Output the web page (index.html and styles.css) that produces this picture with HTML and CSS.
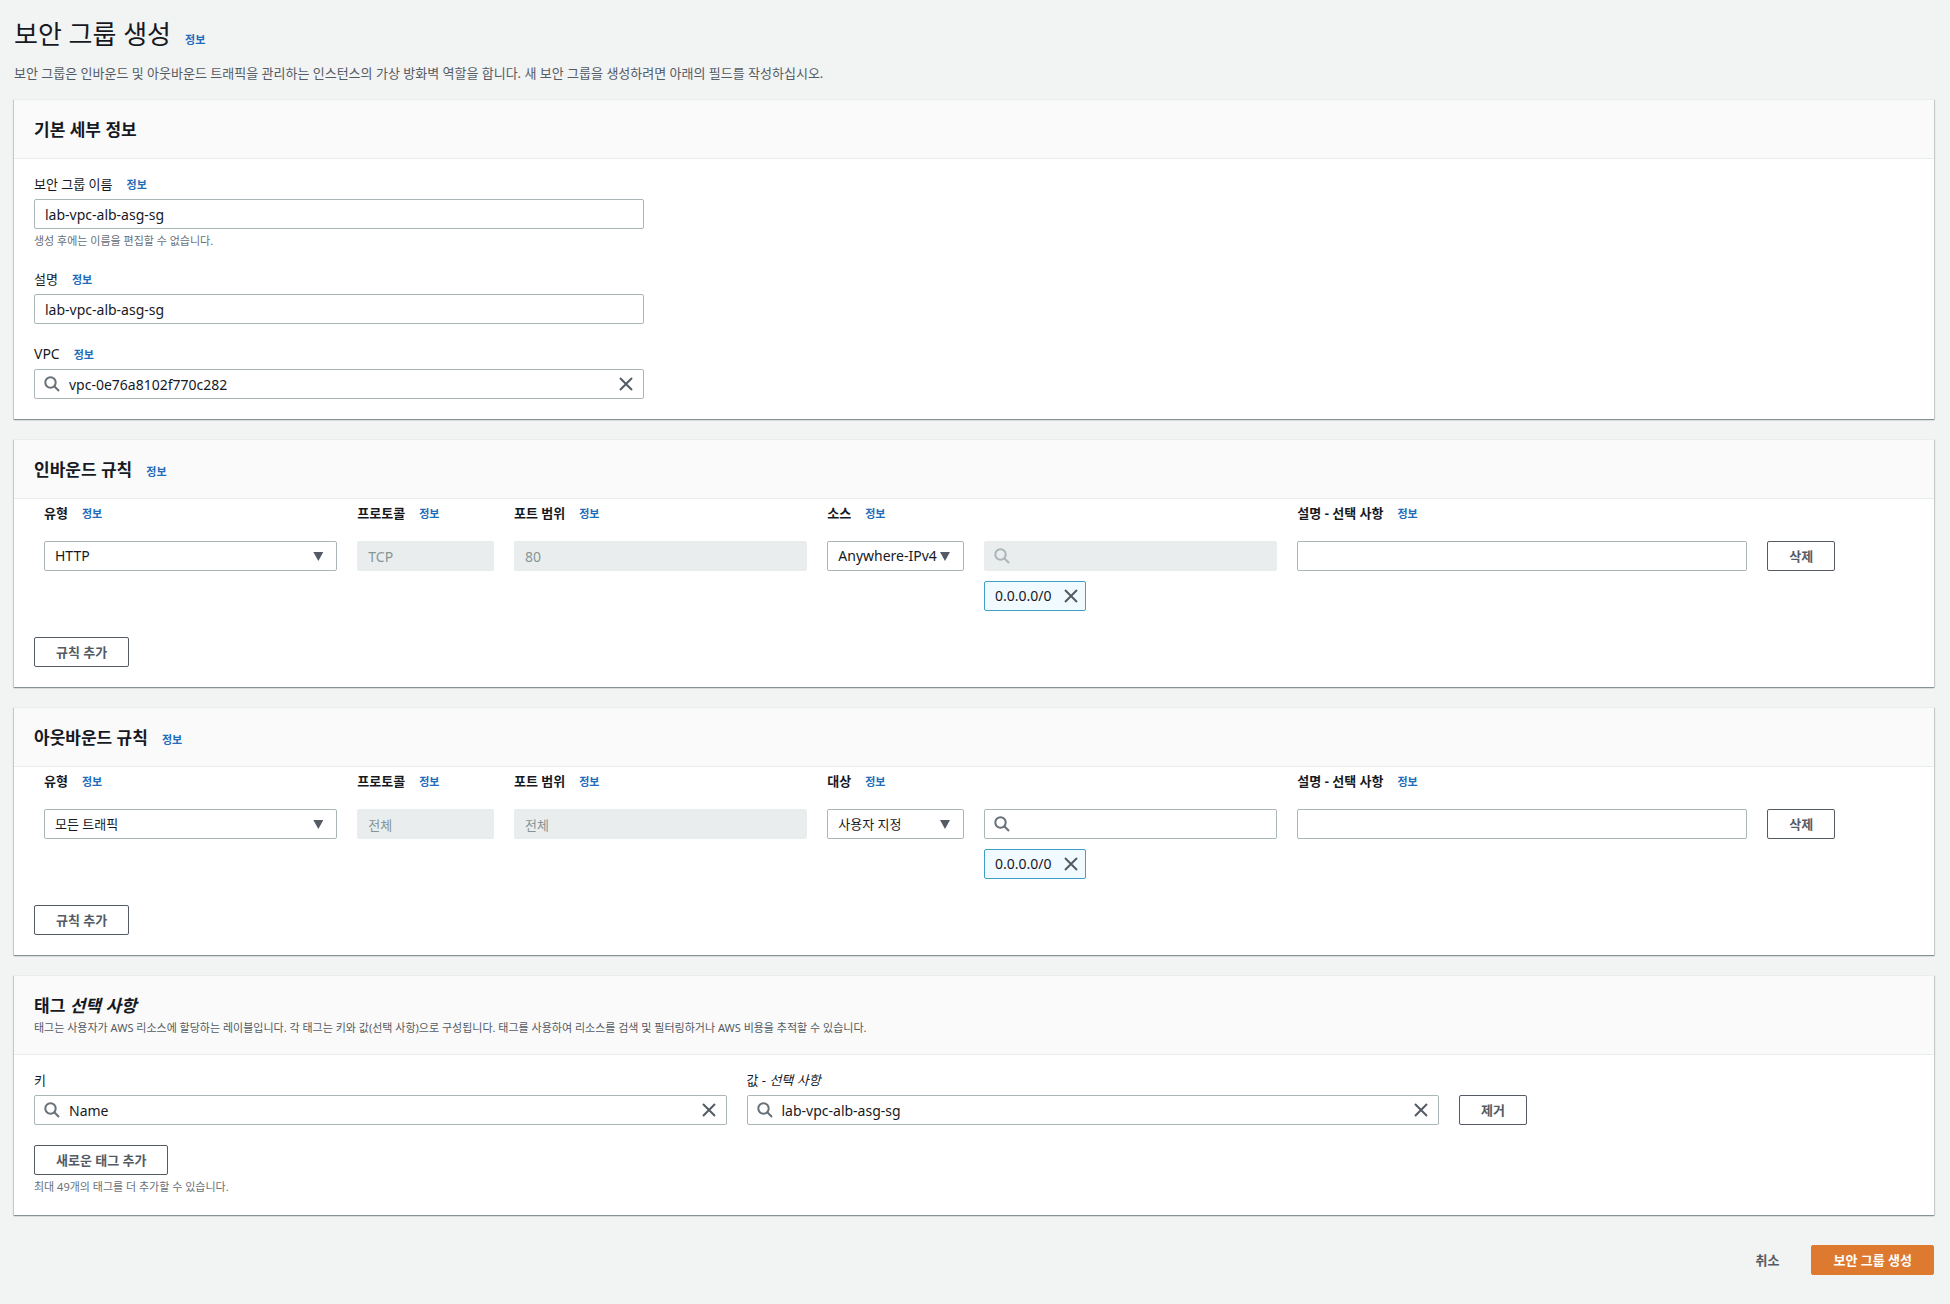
FILE: index.html
```html
<!DOCTYPE html>
<html lang="ko">
<head>
<meta charset="utf-8">
<meta name="viewport" content="width=device-width, initial-scale=1">
<title>보안 그룹 생성</title>
<link rel="stylesheet" href="styles.css">
</head>
<body>
<svg class="sprite" aria-hidden="true">
  <symbol id="icon-search" viewBox="0 0 16 16"><circle cx="6.5" cy="6.5" r="5.2"/><path d="M10.3 10.3 15 15"/></symbol>
  <symbol id="icon-close" viewBox="0 0 16 16"><path d="M2 2l12 12M14 2L2 14"/></symbol>
</svg>
<main class="page">
  <header class="page-header">
    <div class="heading">
      <h1>보안 그룹 생성</h1>
      <a class="info" href="#">정보</a>
    </div>
    <p>보안 그룹은 인바운드 및 아웃바운드 트래픽을 관리하는 인스턴스의 가상 방화벽 역할을 합니다. 새 보안 그룹을 생성하려면 아래의 필드를 작성하십시오.</p>
  </header>

  <form class="form">
    <section class="panel">
      <header class="panel-header"><h2>기본 세부 정보</h2></header>
      <div class="panel-body details">
        <div class="field">
          <div class="field-label"><label for="name">보안 그룹 이름</label><a class="info" href="#">정보</a></div>
          <input class="input" id="name" type="text" value="lab-vpc-alb-asg-sg">
          <p class="hint">생성 후에는 이름을 편집할 수 없습니다.</p>
        </div>
        <div class="field">
          <div class="field-label"><label for="desc">설명</label><a class="info" href="#">정보</a></div>
          <input class="input" id="desc" type="text" value="lab-vpc-alb-asg-sg">
        </div>
        <div class="field">
          <div class="field-label"><label class="latin" for="vpc">VPC</label><a class="info" href="#">정보</a></div>
          <div class="search">
            <svg class="icon"><use href="#icon-search"/></svg>
            <input class="input" id="vpc" type="text" value="vpc-0e76a8102f770c282">
            <button class="clear" type="button" aria-label="지우기"><svg class="icon"><use href="#icon-close"/></svg></button>
          </div>
        </div>
      </div>
    </section>

    <section class="panel">
      <header class="panel-header heading"><h2>인바운드 규칙</h2><a class="info" href="#">정보</a></header>
      <div class="panel-body rules">
        <div class="rule-grid rule-head">
          <div class="field-label span-2"><label for="in-type">유형</label><a class="info" href="#">정보</a></div>
          <div class="field-label"><label for="in-protocol">프로토콜</label><a class="info" href="#">정보</a></div>
          <div class="field-label span-2"><label for="in-port">포트 범위</label><a class="info" href="#">정보</a></div>
          <div class="field-label span-3"><label for="in-source">소스</label><a class="info" href="#">정보</a></div>
          <div class="field-label span-3"><label for="in-desc">설명 - 선택 사항</label><a class="info" href="#">정보</a></div>
        </div>
        <div class="rule-grid">
          <div class="select span-2"><select class="input" id="in-type"><option>HTTP</option></select></div>
          <div><input class="input" id="in-protocol" type="text" value="TCP" disabled></div>
          <div class="span-2"><input class="input" id="in-port" type="text" value="80" disabled></div>
          <div class="select"><select class="input" id="in-source"><option>Anywhere-IPv4</option></select></div>
          <div class="span-2">
            <div class="search disabled">
              <svg class="icon"><use href="#icon-search"/></svg>
              <input class="input" type="text" aria-label="소스 검색" disabled>
            </div>
            <div class="token">0.0.0.0/0<button class="remove" type="button" aria-label="0.0.0.0/0 제거"><svg class="icon"><use href="#icon-close"/></svg></button></div>
          </div>
          <div class="span-3"><input class="input" id="in-desc" type="text"></div>
          <div><button class="button" type="button">삭제</button></div>
        </div>
        <button class="button" type="button">규칙 추가</button>
      </div>
    </section>

    <section class="panel">
      <header class="panel-header heading"><h2>아웃바운드 규칙</h2><a class="info" href="#">정보</a></header>
      <div class="panel-body rules">
        <div class="rule-grid rule-head">
          <div class="field-label span-2"><label for="out-type">유형</label><a class="info" href="#">정보</a></div>
          <div class="field-label"><label for="out-protocol">프로토콜</label><a class="info" href="#">정보</a></div>
          <div class="field-label span-2"><label for="out-port">포트 범위</label><a class="info" href="#">정보</a></div>
          <div class="field-label span-3"><label for="out-target">대상</label><a class="info" href="#">정보</a></div>
          <div class="field-label span-3"><label for="out-desc">설명 - 선택 사항</label><a class="info" href="#">정보</a></div>
        </div>
        <div class="rule-grid">
          <div class="select span-2"><select class="input korean" id="out-type"><option>모든 트래픽</option></select></div>
          <div><input class="input korean" id="out-protocol" type="text" value="전체" disabled></div>
          <div class="span-2"><input class="input korean" id="out-port" type="text" value="전체" disabled></div>
          <div class="select"><select class="input korean" id="out-target"><option>사용자 지정</option></select></div>
          <div class="span-2">
            <div class="search">
              <svg class="icon"><use href="#icon-search"/></svg>
              <input class="input" type="text" aria-label="대상 검색">
            </div>
            <div class="token">0.0.0.0/0<button class="remove" type="button" aria-label="0.0.0.0/0 제거"><svg class="icon"><use href="#icon-close"/></svg></button></div>
          </div>
          <div class="span-3"><input class="input" id="out-desc" type="text"></div>
          <div><button class="button" type="button">삭제</button></div>
        </div>
        <button class="button" type="button">규칙 추가</button>
      </div>
    </section>

    <section class="panel">
      <header class="panel-header">
        <h2>태그 <em>선택 사항</em></h2>
        <p>태그는 사용자가 AWS 리소스에 할당하는 레이블입니다. 각 태그는 키와 값(선택 사항)으로 구성됩니다. 태그를 사용하여 리소스를 검색 및 필터링하거나 AWS 비용을 추적할 수 있습니다.</p>
      </header>
      <div class="panel-body">
        <div class="tag-grid">
          <div class="span-3">
            <div class="field-label"><label for="tag-key">키</label></div>
            <div class="search">
              <svg class="icon"><use href="#icon-search"/></svg>
              <input class="input" id="tag-key" type="text" value="Name">
              <button class="clear" type="button" aria-label="지우기"><svg class="icon"><use href="#icon-close"/></svg></button>
            </div>
          </div>
          <div class="span-3">
            <div class="field-label"><label for="tag-value">값 - <em>선택 사항</em></label></div>
            <div class="search">
              <svg class="icon"><use href="#icon-search"/></svg>
              <input class="input" id="tag-value" type="text" value="lab-vpc-alb-asg-sg">
              <button class="clear" type="button" aria-label="지우기"><svg class="icon"><use href="#icon-close"/></svg></button>
            </div>
          </div>
          <button class="button" type="button">제거</button>
        </div>
        <button class="button" type="button">새로운 태그 추가</button>
        <p class="hint">최대 49개의 태그를 더 추가할 수 있습니다.</p>
      </div>
    </section>

    <footer class="actions">
      <button class="button link" type="button">취소</button>
      <button class="button primary" type="submit">보안 그룹 생성</button>
    </footer>
  </form>
</main>
</body>
</html>
```
FILE: styles.css
```css
* { box-sizing: border-box; }

body {
  margin: 0;
  background: #f2f3f3;
  color: #16191f;
  font: 13px/20px "Noto Sans", "Noto Sans CJK KR", sans-serif;
}

h1, h2, p { margin: 0; }

.sprite { position: absolute; width: 0; height: 0; }

.icon {
  display: block;
  width: 16px;
  height: 16px;
  fill: none;
  stroke: #687078;
  stroke-width: 2;
}

.page { padding: 16px 16px 29px 14px; }

.page-header { padding-bottom: 16px; color: #545b64; }
.page-header p { margin-top: 11px; }

.heading { display: flex; align-items: baseline; gap: 14px; }

h1 { color: #16191f; font-size: 26px; font-weight: 400; line-height: 36px; }
h2 { font-size: 17px; font-weight: 700; line-height: 24px; }

.info {
  color: #1f6cba;
  font-size: 11px;
  font-weight: 700;
  text-decoration: none;
}

.form { display: flex; flex-direction: column; gap: 20px; }

.panel {
  background: #fff;
  border-top: 1px solid #eaeded;
  box-shadow: 0 1px 0 0 #879196, 0 1px 1px 0 #001c244d, 1px 1px 1px 0 #001c2426, -1px 1px 1px 0 #001c2426;
}

.panel-header {
  padding: 18px 20px 16px;
  background: #fafafa;
  border-bottom: 1px solid #eaeded;
}
.panel-header p { padding: 1px 0 2px; color: #545b64; font-size: 11px; line-height: 17px; }

.panel-body { padding: 15px 20px 20px; }
.panel-body.rules { padding-top: 4px; }

.details { display: flex; flex-direction: column; gap: 20px; }
.field { width: 100%; max-width: 610px; }
.field-label { display: flex; align-items: baseline; gap: 14px; height: 20px; margin-bottom: 5px; }
.latin { font-size: 14px; }

.input {
  display: block;
  width: 100%;
  height: 30px;
  padding: 0 10px;
  border: 1px solid #aab7b8;
  border-radius: 2px;
  background: #fff;
  color: #16191f;
  font: 14px/20px "Noto Sans", "Noto Sans CJK KR", sans-serif;
  appearance: none;
}
.input.korean { font-size: 13px; }
.input:disabled {
  border-color: #eaeded;
  background: #eaeded;
  color: #879596;
  opacity: 1;
}

.select { position: relative; }
.select .input { padding-right: 24px; }
.select::after {
  content: "";
  position: absolute;
  top: 11px;
  right: 24px;
  width: 10px;
  height: 9px;
  background: #545b64;
  clip-path: polygon(0 0, 100% 0, 50% 100%);
  pointer-events: none;
}

.search { position: relative; }
.search .input { padding-left: 34px; padding-right: 34px; }
.search > .icon { position: absolute; top: 7px; left: 10px; }
.search.disabled > .icon { stroke: #aab7b8; }

.clear, .remove { padding: 0; border: 0; background: none; }
.clear { position: absolute; top: 7px; right: 10px; }
.clear .icon, .remove .icon { stroke: #545b64; }

.hint { margin-top: 3px; color: #687078; font-size: 11px; line-height: 17px; }

.rule-grid { display: grid; grid-template-columns: repeat(12, minmax(0, 1fr)); margin-bottom: 26px; }
.rule-grid > * { padding: 0 10px; }
.rule-head { margin-bottom: 13px; font-weight: 700; }
.span-2 { grid-column: span 2; }
.span-3 { grid-column: span 3; }

.token {
  display: inline-flex;
  align-items: center;
  gap: 11px;
  height: 30px;
  margin-top: 10px;
  padding: 0 6px 0 10px;
  border: 1px solid #3f9fc7;
  border-radius: 2px;
  background: #f1faff;
  font-size: 14px;
  vertical-align: top;
}

.tag-grid {
  display: grid;
  grid-template-columns: repeat(8, minmax(0, 1fr));
  gap: 20px;
  align-items: end;
  justify-items: start;
  margin-bottom: 20px;
}
.tag-grid .span-3 { width: 100%; }

.button {
  display: block;
  height: 30px;
  padding: 0 21px;
  border: 1px solid #545b64;
  border-radius: 2px;
  background: #fff;
  color: #545b64;
  font: 700 13px/20px "Noto Sans", "Noto Sans CJK KR", sans-serif;
  white-space: nowrap;
}
.button.link { border-color: transparent; background: none; }
.button.primary { border-color: #dd7a30; background: #dd7a30; color: #fff; }

.actions { display: flex; justify-content: flex-end; gap: 10px; padding-top: 10px; }
```
